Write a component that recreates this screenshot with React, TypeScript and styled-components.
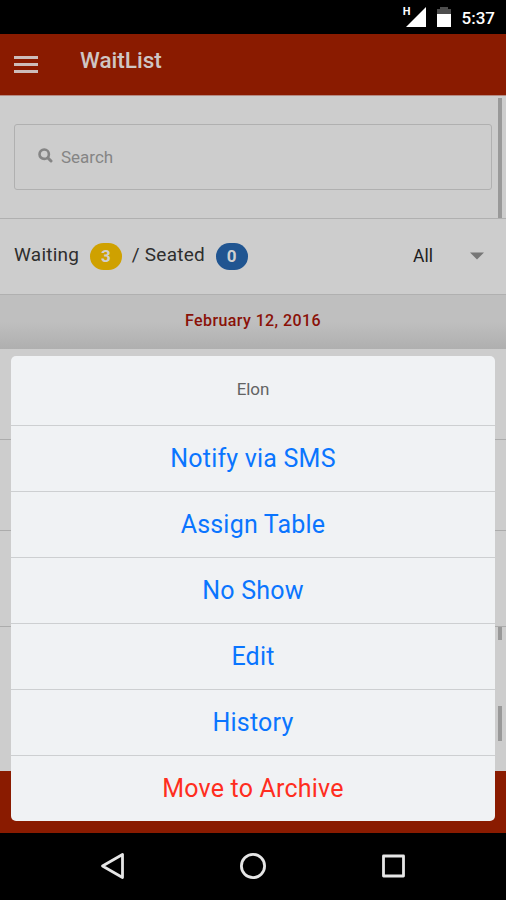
import React from "react";
import styled, { createGlobalStyle } from "styled-components";

const GlobalStyle = createGlobalStyle`
  * { box-sizing: border-box; }
  body { margin: 0; background: #000; font-family: Roboto, "Liberation Sans", sans-serif; }
`;

const Screen = styled.div`
  width: 506px;
  height: 900px;
  display: flex;
  flex-direction: column;
  background: #000;
  overflow: hidden;
`;

const StatusBar = styled.header`
  height: 34px;
  flex: none;
  display: flex;
  justify-content: flex-end;
  align-items: center;
  padding-right: 11px;
  color: #fff;
`;

const NetworkType = styled.span`
  align-self: flex-start;
  margin: 6px -5px 0 0;
  font-size: 11px;
  font-weight: 700;
  line-height: 12px;
`;

const Clock = styled.span`
  font-size: 17px;
  font-weight: 500;
  line-height: 20px;
  margin: 1px 0 0 10px;
`;

const AppView = styled.main`
  position: relative;
  height: 799px;
  flex: none;
  display: flex;
  flex-direction: column;
  background: #cdcdcd;
`;

const TitleBar = styled.div`
  height: 62px;
  flex: none;
  display: flex;
  align-items: flex-start;
  padding-left: 14px;
  background: #8a1b00;
  border-bottom: 1px solid #b58a82;
`;

const MenuButton = styled.div`
  width: 24px;
  height: 17px;
  margin-top: 22px;
  display: flex;
  flex-direction: column;
  justify-content: space-between;
`;

const MenuLine = styled.span`
  height: 3px;
  background: #cdbdba;
`;

const Title = styled.h1`
  margin: 12px 0 0 42px;
  font-size: 22.5px;
  font-weight: 500;
  line-height: 29px;
  color: #cfc6c4;
`;

const SearchSection = styled.section`
  height: 123px;
  flex: none;
  display: flex;
  justify-content: space-between;
  border-bottom: 1px solid #b0b0b0;
  padding-left: 14px;
`;

const SearchField = styled.div`
  width: 478px;
  height: 66px;
  margin-top: 28px;
  display: flex;
  align-items: center;
  gap: 8px;
  padding-left: 23px;
  border: 1px solid #b0b0b0;
  border-radius: 3px;
  font-size: 17px;
  color: #858585;
  svg { margin-top: -3px; }
`;

const Scrollbar = styled.span<{ $top: number; $height: number }>`
  width: 4px;
  height: ${(p) => p.$height}px;
  margin: ${(p) => p.$top}px 4px 0 0;
  background: #999;
`;

const FilterBar = styled.section`
  height: 75px;
  flex: none;
  display: flex;
  align-items: center;
  padding: 0 22px 0 14px;
  font-size: 19px;
  color: #2e2e2e;
`;

const Label = styled.span<{ $gap?: number }>`
  margin-left: ${(p) => p.$gap ?? 0}px;
  letter-spacing: 0.25px;
  line-height: 24px;
  margin-top: -3px;
`;

const Badge = styled.span<{ $color: string }>`
  width: 32px;
  height: 27px;
  margin-left: 10.5px;
  display: flex;
  align-items: center;
  justify-content: center;
  border-radius: 14px;
  background: ${(p) => p.$color};
  color: #d0d0d0;
  font-size: 17px;
  font-weight: 700;
  line-height: 24px;
  padding-bottom: 2px;
`;

const Filter = styled.div`
  margin: -2px 0 0 auto;
  display: flex;
  align-items: center;
  gap: 37px;
  font-size: 17.5px;
  color: #1c1c1c;
  svg { margin-top: 1px; }
`;

const DateBand = styled.div`
  height: 55px;
  flex: none;
  padding-top: 16px;
  border-top: 1px solid #b0b0b0;
  background: linear-gradient(#bfbfbf 50%, #afafaf);
  text-align: center;
  font-size: 16px;
  font-weight: 500;
  letter-spacing: 0.4px;
  line-height: 20px;
  color: #8a1108;
`;

const ListRow = styled.div<{ $height: number }>`
  height: ${(p) => p.$height}px;
  flex: none;
  border-bottom: 1px solid #acacac;
`;

const ListTail = styled.div`
  flex: 1;
  display: flex;
  flex-direction: column;
  align-items: flex-end;
`;

const Footer = styled.div`
  height: 62px;
  flex: none;
  background: #8a1b00;
`;

const ActionSheet = styled.div`
  position: absolute;
  left: 11px;
  right: 11px;
  bottom: 12px;
  height: 465px;
  border-radius: 5px;
  background: #f0f2f4;
  overflow: hidden;
  text-align: center;
`;

const SheetTitle = styled.div`
  height: 69px;
  line-height: 66px;
  font-size: 17px;
  letter-spacing: -0.1px;
  color: #636363;
`;

const SheetAction = styled.div<{ $danger?: boolean }>`
  height: 66px;
  border-top: 1px solid #cdcfd1;
  line-height: 66px;
  font-size: 25px;
  letter-spacing: 0.2px;
  color: ${(p) => (p.$danger ? "#ff2d20" : "#0a75ff")};
`;

const NavBar = styled.nav`
  flex: 1;
  display: flex;
  justify-content: center;
  align-items: center;
  gap: 112px;
  padding-bottom: 1px;
`;

const actions = ["Notify via SMS", "Assign Table", "No Show", "Edit", "History"];

export default function App() {
  return (
    <Screen>
      <GlobalStyle />
      <StatusBar>
        <NetworkType>H</NetworkType>
        <svg width="46" height="34" viewBox="4 0 46 34" fill="#fff">
          <path d="M4 27L24 7V27Z" />
          <path d="M35 9H38V7H46V9H49V14H35Z" fill="#4d4d4d" />
          <path d="M35 14H49V27H35Z" />
        </svg>
        <Clock>5:37</Clock>
      </StatusBar>
      <AppView>
        <TitleBar>
          <MenuButton><MenuLine /><MenuLine /><MenuLine /></MenuButton>
          <Title>WaitList</Title>
        </TitleBar>
        <SearchSection>
          <SearchField>
            <svg width="15" height="15" viewBox="0 0 15 15" fill="none" stroke="#858585">
              <circle cx="6.2" cy="6.2" r="4.7" strokeWidth="2.6" />
              <path d="M10 10L13 13" strokeWidth="3" strokeLinecap="round" />
            </svg>
            Search
          </SearchField>
          <Scrollbar $top={2} $height={120} />
        </SearchSection>
        <FilterBar>
          <Label>Waiting</Label>
          <Badge $color="#cfa100">3</Badge>
          <Label $gap={10}>/ Seated</Label>
          <Badge $color="#205591">0</Badge>
          <Filter>
            All
            <svg width="14" height="8" viewBox="0 0 14 8"><path d="M0 0.5H14L7 7.5Z" fill="#777" /></svg>
          </Filter>
        </FilterBar>
        <DateBand>February 12, 2016</DateBand>
        <ListRow $height={91} />
        <ListRow $height={91} />
        <ListRow $height={96} />
        <ListTail>
          <Scrollbar $top={0} $height={13} />
          <Scrollbar $top={66} $height={35} />
        </ListTail>
        <Footer />
        <ActionSheet>
          <SheetTitle>Elon</SheetTitle>
          {actions.map((name) => <SheetAction key={name}>{name}</SheetAction>)}
          <SheetAction $danger>Move to Archive</SheetAction>
        </ActionSheet>
      </AppView>
      <NavBar>
        <svg width="28" height="28" viewBox="0 0 28 28" fill="none" stroke="#e6e6e6" strokeWidth="2.8" strokeLinejoin="round">
          <path d="M23.5 2.5V25.5L3.5 14Z" />
        </svg>
        <svg width="28" height="28" viewBox="0 0 28 28" fill="none" stroke="#e6e6e6" strokeWidth="2.8">
          <circle cx="14" cy="14" r="11.6" />
        </svg>
        <svg width="28" height="28" viewBox="0 0 28 28" fill="none" stroke="#e6e6e6" strokeWidth="2.8" strokeLinejoin="round">
          <path d="M4.5 4H24.5V24H4.5Z" />
        </svg>
      </NavBar>
    </Screen>
  );
}
